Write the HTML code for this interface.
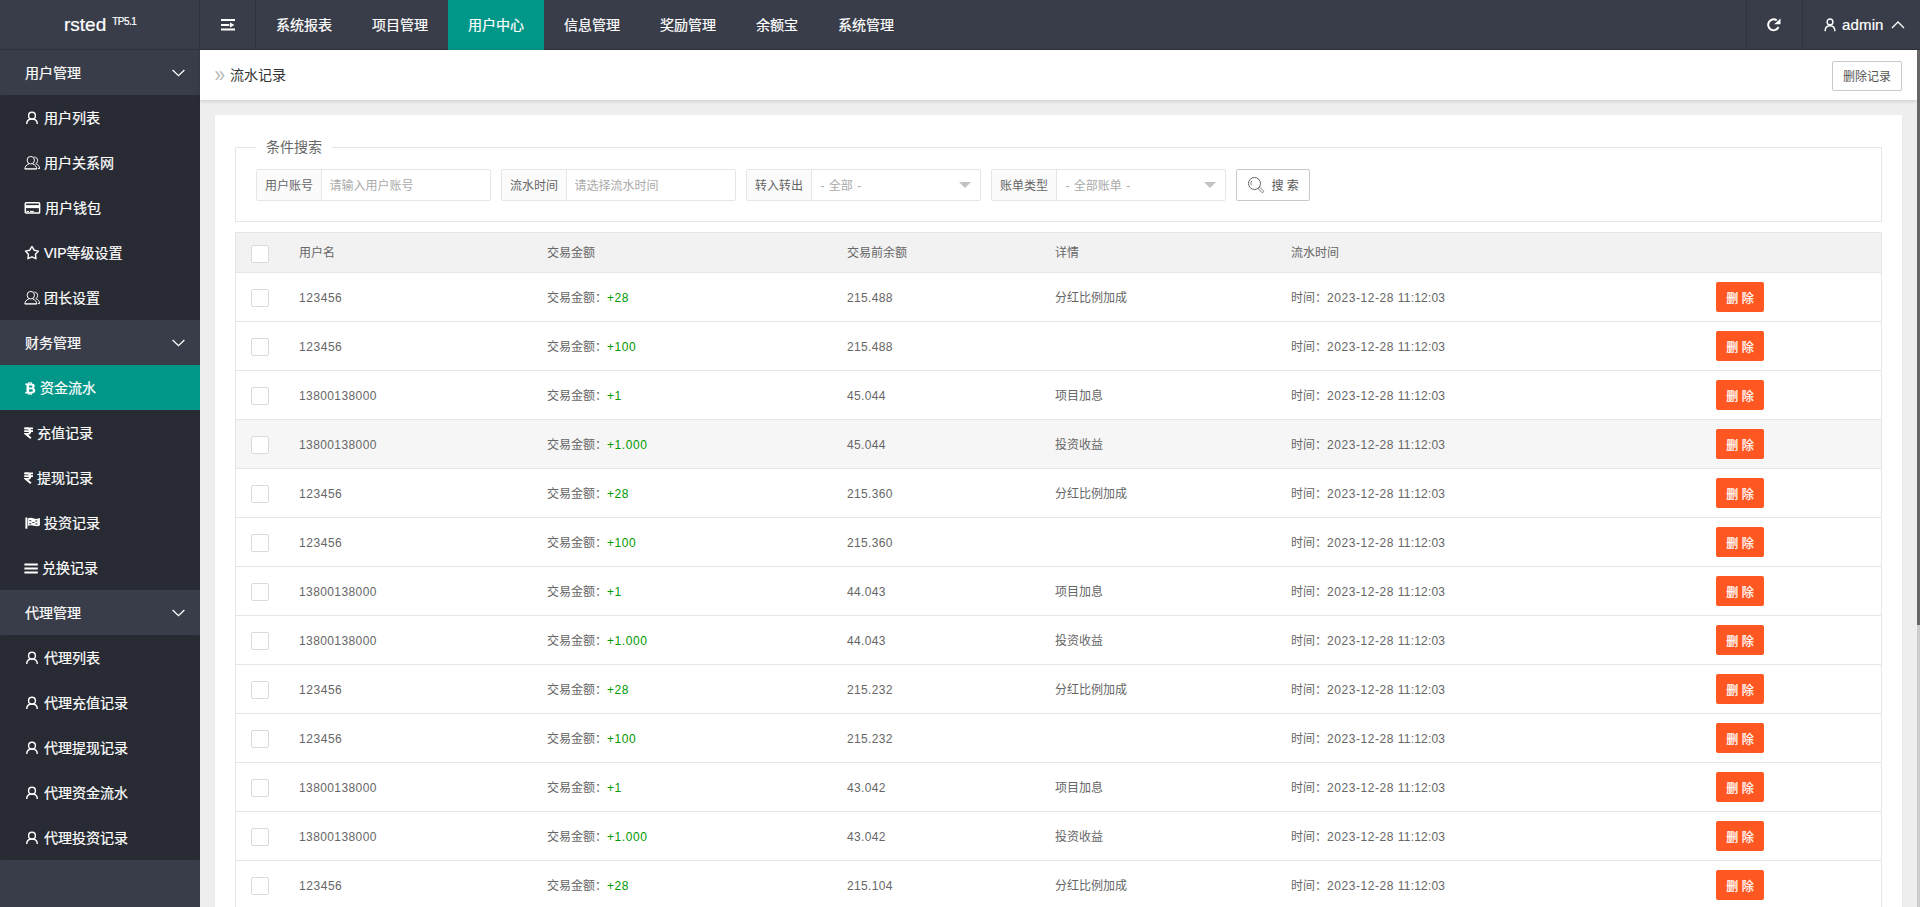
<!DOCTYPE html>
<html lang="zh-CN">
<head>
<meta charset="utf-8">
<title>流水记录</title>
<style>
*{box-sizing:border-box;margin:0;padding:0}
html,body{width:1920px;height:907px;overflow:hidden}
body{position:relative;background:#eee;font-family:"Liberation Sans","Noto Sans CJK SC",sans-serif;font-size:14px;color:#333;line-height:1}
svg{display:block}
/* header */
#hd{position:absolute;left:0;top:0;width:1920px;height:50px;background:#393d49}
#logo{position:absolute;left:64px;top:0;height:50px;color:#fff;line-height:49px;font-size:19px;white-space:nowrap}
#logo sup{font-size:10px;position:relative;top:-6px;left:6px;letter-spacing:-.5px;vertical-align:baseline}
.vl{position:absolute;top:0;width:1px;height:50px;background:#2f333d}
#nav a{position:absolute;top:0;height:50px;line-height:50px;color:#fff;font-size:14px;text-align:center;text-decoration:none}
#nav a.on{background:#009688}
#hd .ic{position:absolute}
#hd,#sd{-webkit-text-stroke:.2px #fff}
#adm{position:absolute;left:1842px;top:0;line-height:50px;color:#fff;font-size:15px;letter-spacing:.15px}
/* side */
#sd{position:absolute;left:0;top:50px;width:200px;height:857px;background:#393d49}
#sd .g{position:relative;height:45px;line-height:47px;color:#fff;padding-left:25px;font-size:14px;background:#393d49}
#sd .g svg{position:absolute;left:171.5px;top:18.7px}
#sd .sub{background:#282b33;border-radius:2px}
#sd .i{position:relative;height:45px;line-height:47px;color:#fff;font-size:14px;}
#sd .i.on{background:#009688}
#sd .i svg{position:absolute;left:24px;top:15.5px}
#sd .i span{position:absolute;left:44px;top:0;white-space:nowrap}
/* crumb */
#cb{position:absolute;left:200px;top:50px;width:1717px;height:50px;background:#fff;box-shadow:0 1px 4px rgba(0,0,0,.16)}
#cb .t{position:absolute;left:15px;top:0;line-height:50px;font-size:14px;color:#333}
#cb .t i{font-style:normal;color:#bababa;font-size:19px;position:absolute;left:-.5px;top:0;transform:scale(1,1.15);transform-origin:50% 50%}
#cb .b{position:absolute;left:1632px;top:11px;width:70px;height:30px;border:1px solid #c9c9c9;border-radius:2px;font-size:12px;line-height:30px;text-align:center;color:#555;background:#fff}
/* scrollbar */
#sbt{position:absolute;left:1917px;top:50px;width:3px;height:857px;background:#ccc}
#sbh{position:absolute;left:1917px;top:50px;width:3px;height:575px;background:#666}
/* card */
#cd{position:absolute;left:215px;top:115px;width:1687px;height:800px;background:#fff;box-shadow:0 1px 2px rgba(0,0,0,.05)}
#fs{position:absolute;left:20px;top:32px;width:1647px;height:75px;border:1px solid #e6e6e6}
#lg{position:absolute;left:20px;top:-11px;padding:0 10px;background:#fff;font-size:14px;line-height:20px;color:#666}
.ig{position:absolute;top:21px;width:235px;height:32px;border:1px solid #e6e6e6;border-radius:2px;font-size:12px;line-height:30px;background:#fff}
.ig b{font-weight:normal;position:absolute;left:0;top:0;width:65px;height:30px;line-height:32px;background:#fbfbfb;border-right:1px solid #e6e6e6;text-align:center;color:#666}
.ig span{position:absolute;left:72.5px;top:0;line-height:33px;color:#aaa;white-space:nowrap;word-spacing:1px}.ig span.s{left:73.5px}
.ig svg{position:absolute;left:212px;top:12px}
#sb{position:absolute;left:1000px;top:21px;width:74px;height:32px;border:1px solid #c9c9c9;border-radius:2px;font-size:12px;line-height:30px;color:#555;background:#fff}
#sb span{position:absolute;left:34.5px;top:0;line-height:33px;white-space:nowrap}
#sb svg{position:absolute;left:10.2px;top:6px}
/* table */
#tb{position:absolute;left:20px;top:117px;width:1647px;border:1px solid #e6e6e6;border-bottom:none;font-size:12px;color:#666}
#tb .r{position:relative;height:49px;border-bottom:1px solid #e6e6e6;line-height:50px;background:#fff}
#tb .r.h{height:40px;line-height:40px;background:#f2f2f2}
#tb .r.hv{background:#f6f6f6}
#tb .r>*{position:absolute;top:0;white-space:nowrap}
#tb .k{left:15px;top:16px;width:18px;height:18px;border:1px solid #dadada;border-radius:2px;background:#fff}
#tb .r.h .k{top:12px}
#tb .c1{left:63px}#tb .c2{left:311px}#tb .c3{left:611px}#tb .c4{left:819px}#tb .c5{left:1055px}
#tb .c2 em{font-style:normal;color:#090}
#tb .d{left:1480px;top:9px;width:48px;height:30px;border-radius:2px;background:#ff5722;color:#fff;line-height:34px;text-align:center;font-size:12px;-webkit-text-stroke:.25px #fff}
.n{letter-spacing:.55px}.n1{letter-spacing:.4px}.n3{letter-spacing:.33px}.m{letter-spacing:.2px}
</style>
</head>
<body>
<div id="hd">
  <div id="logo">rsted<sup>TP5.1</sup></div>
  <div class="vl" style="left:199px"></div><div style="position:absolute;left:0;top:49px;width:1920px;height:1px;background:rgba(0,0,0,.17)"></div><div class="vl" style="left:255px"></div>
  <div class="vl" style="left:1746px"></div><div class="vl" style="left:1802px"></div>
  <svg class="ic" style="left:221px;top:19px" width="14" height="12" viewBox="0 0 14 12"><path d="M0 0h14v2H0zM0 5h8.300v2H0zM0 9.500h14v2H0zM9 3.600l4.400 2.400L9 8.400z" fill="#fff"/></svg>
  <div id="nav">
    <a style="left:256px;width:96px">系统报表</a>
    <a style="left:352px;width:96px">项目管理</a>
    <a class="on" style="left:448px;width:96px">用户中心</a>
    <a style="left:544px;width:96px">信息管理</a>
    <a style="left:640px;width:96px">奖励管理</a>
    <a style="left:736px;width:82px">余额宝</a>
    <a style="left:818px;width:96px">系统管理</a>
  </div>
  <svg class="ic" style="left:1767px;top:18px" width="14" height="14" viewBox="0 0 14 14"><path d="M9.7 2.330A5.400 5.400 0 1 0 11.500 9.030" stroke="#fff" stroke-width="2" fill="none"/><path d="M7.200 6.200H13.500V.6z" fill="#fff"/></svg>
  <svg class="ic" style="left:1824px;top:18px" width="12" height="14" viewBox="0 0 12 14"><circle cx="6" cy="3.9" r="2.9" stroke="#fff" stroke-width="1.4" fill="none"/><path d="M1.1 13.200c0-3.800 2.100-5.500 4.900-5.500s4.900 1.700 4.900 5.500" stroke="#fff" stroke-width="1.4" fill="none"/></svg>
  <div id="adm">admin</div>
  <svg class="ic" style="left:1891px;top:21px" width="14" height="8" viewBox="0 0 14 8"><path d="M1 7l6-6 6 6" stroke="#fff" stroke-width="1.3" fill="none"/></svg>
</div>

<div id="sd">
  <div class="g">用户管理<svg width="13" height="8" viewBox="0 0 13 8"><path d="M.6 1l5.9 5.7L12.4 1" stroke="#fff" stroke-width="1.3" fill="none"/></svg></div>
  <div class="sub">
  <div class="i"><svg width="17" height="15" viewBox="0 0 17 15"><circle cx="8" cy="4.7" r="3.4" stroke="#fff" stroke-width="1.4" fill="none"/><path d="M2.7 13.1c0-3.400 2.200-5.100 5.300-5.100s5.300 1.700 5.300 5.100" stroke="#fff" stroke-width="1.4" fill="none"/></svg><span>用户列表</span></div>
  <div class="i"><svg width="17" height="15" viewBox="0 0 17 15"><g stroke="#fff" stroke-width="1" fill="none"><ellipse cx="6.8" cy="4.2" rx="3.700" ry="3.800"/><path d="M.9 13.1c0-2.700 1.500-4.300 4-5.100M12.700 13.100c0-2.700-1.500-4.300-4-5.100"/><path d="M.9 12.900h11.800" stroke-width="1.400"/><path d="M10.400 1c2 .2 3.200 1.600 3.200 3.500 0 1.500-.7 2.600-1.800 3.200 2.300.8 3.700 2.300 3.700 4.900h-1.600"/></g></svg><span>用户关系网</span></div>
  <div class="i"><svg width="17" height="15" viewBox="0 0 17 15"><rect x="1.3" y="1.85" width="14.3" height="10.1" rx=".8" stroke="#fff" stroke-width="1.5" fill="none"/><rect x="1" y="4.1" width="15" height="3" fill="#fff"/><rect x="2.5" y="9.9" width="2.5" height="1.1" fill="#fff"/><rect x="6" y="9.9" width="3.8" height="1.1" fill="#fff"/></svg><span style="left:45px">用户钱包</span></div>
  <div class="i"><svg width="17" height="15" viewBox="0 0 17 15"><path d="M7.95 0.40L10.12 4.21L14.42 5.10L11.47 8.34L11.95 12.70L7.95 10.90L3.95 12.70L4.43 8.34L1.48 5.10L5.78 4.21z" stroke="#fff" stroke-width="1.4" fill="none" stroke-linejoin="round"/></svg><span>VIP等级设置</span></div>
  <div class="i"><svg width="17" height="15" viewBox="0 0 17 15"><g stroke="#fff" stroke-width="1" fill="none"><ellipse cx="6.8" cy="4.2" rx="3.700" ry="3.800"/><path d="M.9 13.1c0-2.700 1.500-4.300 4-5.100M12.700 13.100c0-2.700-1.500-4.300-4-5.100"/><path d="M.9 12.900h11.800" stroke-width="1.400"/><path d="M10.400 1c2 .2 3.200 1.600 3.200 3.500 0 1.500-.7 2.600-1.800 3.200 2.300.8 3.700 2.300 3.700 4.900h-1.600"/></g></svg><span>团长设置</span></div>
  </div>
  <div class="g">财务管理<svg width="13" height="8" viewBox="0 0 13 8"><path d="M.6 1l5.9 5.7L12.4 1" stroke="#fff" stroke-width="1.3" fill="none"/></svg></div>
  <div class="sub">
  <div class="i on"><svg width="17" height="15" viewBox="0 0 17 15"><g transform="translate(.7 0)"><path d="M1.800 2.500h5.200c2 0 3 .9 3 2.400 0 1.100-.6 1.900-1.600 2.200 1.400.3 2.200 1.200 2.200 2.500 0 1.700-1.200 2.900-3.400 2.900H1.800zM4.400 4.400v2.100h2c.8 0 1.200-.4 1.200-1.100s-.4-1-1.200-1zM4.400 8.300v2.400h2.300c.9 0 1.400-.4 1.400-1.200s-.5-1.200-1.400-1.200z" fill="#fff" fill-rule="evenodd"/><path d="M4.200 1v2M6.400 1v2M4.200 12v2M6.400 12v2" stroke="#fff" stroke-width="1.300"/><path d="M.6 3.200h2M.6 11.800h2" stroke="#fff" stroke-width="1.400"/></g></svg><span style="left:40px">资金流水</span></div>
  <div class="i"><svg width="17" height="15" viewBox="0 0 17 15"><g stroke="#fff" fill="none"><path d="M.2 2.350h8.800M.2 5.200h8.800" stroke-width="1.700"/><path d="M.8 2.350h2.200c2.200 0 3.300 1.100 3.300 2.850S5.100 8.050 2.900 8.050H1.800L6.900 12.300" stroke-width="1.900"/></g></svg><span style="left:37px">充值记录</span></div>
  <div class="i"><svg width="17" height="15" viewBox="0 0 17 15"><g stroke="#fff" fill="none"><path d="M.2 2.350h8.800M.2 5.200h8.800" stroke-width="1.700"/><path d="M.8 2.350h2.200c2.200 0 3.300 1.100 3.300 2.850S5.100 8.050 2.900 8.050H1.800L6.900 12.300" stroke-width="1.900"/></g></svg><span style="left:37px">提现记录</span></div>
  <div class="i"><svg width="17" height="15" viewBox="0 0 17 15"><path d="M2.4 1.500v11.200" stroke="#fff" stroke-width="2"/><path d="M3.900 2.400c2.200-1 3.900-.7 6 0s3.900.7 6-.3v7.400c-2.100 1-3.900 1-6 .3s-3.800-1-6 0z" fill="#fff"/><path d="M5.300 4.200h2v1.100h-2zM11.300 4.400h2.100v1.100h-2.100zM8.400 5.900h2v1.100h-2zM5.300 7.300h2v1h-2zM11.400 7.600h2.100v1h-2.100z" fill="#282b33"/></svg><span>投资记录</span></div>
  <div class="i"><svg width="17" height="15" viewBox="0 0 17 15"><path d="M.4 2.500h13.400v2H.4zM.4 6.500h13.400v2H.4zM.4 10.500h13.400v2H.4z" fill="#fff"/></svg><span style="left:42px">兑换记录</span></div>
  </div>
  <div class="g">代理管理<svg width="13" height="8" viewBox="0 0 13 8"><path d="M.6 1l5.9 5.7L12.4 1" stroke="#fff" stroke-width="1.3" fill="none"/></svg></div>
  <div class="sub">
  <div class="i"><svg width="17" height="15" viewBox="0 0 17 15"><circle cx="8" cy="4.7" r="3.4" stroke="#fff" stroke-width="1.4" fill="none"/><path d="M2.7 13.1c0-3.400 2.200-5.100 5.300-5.100s5.300 1.700 5.300 5.100" stroke="#fff" stroke-width="1.4" fill="none"/></svg><span>代理列表</span></div>
  <div class="i"><svg width="17" height="15" viewBox="0 0 17 15"><circle cx="8" cy="4.7" r="3.4" stroke="#fff" stroke-width="1.4" fill="none"/><path d="M2.7 13.1c0-3.400 2.200-5.100 5.300-5.100s5.300 1.700 5.300 5.100" stroke="#fff" stroke-width="1.4" fill="none"/></svg><span>代理充值记录</span></div>
  <div class="i"><svg width="17" height="15" viewBox="0 0 17 15"><circle cx="8" cy="4.7" r="3.4" stroke="#fff" stroke-width="1.4" fill="none"/><path d="M2.7 13.1c0-3.400 2.200-5.100 5.300-5.100s5.300 1.700 5.300 5.100" stroke="#fff" stroke-width="1.4" fill="none"/></svg><span>代理提现记录</span></div>
  <div class="i"><svg width="17" height="15" viewBox="0 0 17 15"><circle cx="8" cy="4.7" r="3.4" stroke="#fff" stroke-width="1.4" fill="none"/><path d="M2.7 13.1c0-3.400 2.200-5.100 5.300-5.100s5.300 1.700 5.300 5.100" stroke="#fff" stroke-width="1.4" fill="none"/></svg><span>代理资金流水</span></div>
  <div class="i"><svg width="17" height="15" viewBox="0 0 17 15"><circle cx="8" cy="4.7" r="3.4" stroke="#fff" stroke-width="1.4" fill="none"/><path d="M2.7 13.1c0-3.400 2.200-5.100 5.300-5.100s5.300 1.700 5.300 5.100" stroke="#fff" stroke-width="1.4" fill="none"/></svg><span>代理投资记录</span></div>
  </div>
</div>

<div id="cb">
  <div class="t"><i>»</i><span style="margin-left:15px">流水记录</span></div>
  <div class="b">删除记录</div>
</div>
<div id="sbt"></div><div id="sbh"></div>

<div id="cd">
  <div id="fs">
    <div id="lg">条件搜索</div>
    <div class="ig" style="left:20px"><b>用户账号</b><span>请输入用户账号</span></div>
    <div class="ig" style="left:265px"><b>流水时间</b><span>请选择流水时间</span></div>
    <div class="ig" style="left:510px"><b>转入转出</b><span class="s">- 全部 -</span><svg width="12" height="6" viewBox="0 0 12 6"><path d="M0 0h12L6 6z" fill="#c2c2c2"/></svg></div>
    <div class="ig" style="left:755px"><b>账单类型</b><span class="s">- 全部账单 -</span><svg width="12" height="6" viewBox="0 0 12 6"><path d="M0 0h12L6 6z" fill="#c2c2c2"/></svg></div>
    <div id="sb"><svg width="18" height="18" viewBox="0 0 18 18"><circle cx="7.5" cy="7.5" r="6" stroke="#666" stroke-width="1" fill="none"/><rect x="-1.1" y="0" width="2.2" height="6.4" rx="1.1" transform="translate(11.7 11.7) rotate(-45)" stroke="#666" stroke-width=".8" fill="none"/><path d="M4.300 9.300a3.700 3.700 0 0 1 .6-4.500" stroke="#666" stroke-width=".8" fill="none"/></svg><span>搜 索</span></div>
  </div>
  <div id="tb">
    <div class="r h"><i class="k"></i><span class="c1">用户名</span><span class="c2">交易金额</span><span class="c3">交易前余额</span><span class="c4">详情</span><span class="c5">流水时间</span></div>
    <div class="r"><i class="k"></i><span class="c1 n">123456</span><span class="c2">交易金额：<em class="n">+28</em></span><span class="c3 n3">215.488</span><span class="c4">分红比例加成</span><span class="c5">时间：<span class="n">2023-12-28 </span><span class="m">11:12:03</span></span><span class="d">删 除</span></div>
    <div class="r"><i class="k"></i><span class="c1 n">123456</span><span class="c2">交易金额：<em class="n">+100</em></span><span class="c3 n3">215.488</span><span class="c4"></span><span class="c5">时间：<span class="n">2023-12-28 </span><span class="m">11:12:03</span></span><span class="d">删 除</span></div>
    <div class="r"><i class="k"></i><span class="c1 n1">13800138000</span><span class="c2">交易金额：<em class="n">+1</em></span><span class="c3 n3">45.044</span><span class="c4">项目加息</span><span class="c5">时间：<span class="n">2023-12-28 </span><span class="m">11:12:03</span></span><span class="d">删 除</span></div>
    <div class="r hv"><i class="k"></i><span class="c1 n1">13800138000</span><span class="c2">交易金额：<em class="n">+1.000</em></span><span class="c3 n3">45.044</span><span class="c4">投资收益</span><span class="c5">时间：<span class="n">2023-12-28 </span><span class="m">11:12:03</span></span><span class="d">删 除</span></div>
    <div class="r"><i class="k"></i><span class="c1 n">123456</span><span class="c2">交易金额：<em class="n">+28</em></span><span class="c3 n3">215.360</span><span class="c4">分红比例加成</span><span class="c5">时间：<span class="n">2023-12-28 </span><span class="m">11:12:03</span></span><span class="d">删 除</span></div>
    <div class="r"><i class="k"></i><span class="c1 n">123456</span><span class="c2">交易金额：<em class="n">+100</em></span><span class="c3 n3">215.360</span><span class="c4"></span><span class="c5">时间：<span class="n">2023-12-28 </span><span class="m">11:12:03</span></span><span class="d">删 除</span></div>
    <div class="r"><i class="k"></i><span class="c1 n1">13800138000</span><span class="c2">交易金额：<em class="n">+1</em></span><span class="c3 n3">44.043</span><span class="c4">项目加息</span><span class="c5">时间：<span class="n">2023-12-28 </span><span class="m">11:12:03</span></span><span class="d">删 除</span></div>
    <div class="r"><i class="k"></i><span class="c1 n1">13800138000</span><span class="c2">交易金额：<em class="n">+1.000</em></span><span class="c3 n3">44.043</span><span class="c4">投资收益</span><span class="c5">时间：<span class="n">2023-12-28 </span><span class="m">11:12:03</span></span><span class="d">删 除</span></div>
    <div class="r"><i class="k"></i><span class="c1 n">123456</span><span class="c2">交易金额：<em class="n">+28</em></span><span class="c3 n3">215.232</span><span class="c4">分红比例加成</span><span class="c5">时间：<span class="n">2023-12-28 </span><span class="m">11:12:03</span></span><span class="d">删 除</span></div>
    <div class="r"><i class="k"></i><span class="c1 n">123456</span><span class="c2">交易金额：<em class="n">+100</em></span><span class="c3 n3">215.232</span><span class="c4"></span><span class="c5">时间：<span class="n">2023-12-28 </span><span class="m">11:12:03</span></span><span class="d">删 除</span></div>
    <div class="r"><i class="k"></i><span class="c1 n1">13800138000</span><span class="c2">交易金额：<em class="n">+1</em></span><span class="c3 n3">43.042</span><span class="c4">项目加息</span><span class="c5">时间：<span class="n">2023-12-28 </span><span class="m">11:12:03</span></span><span class="d">删 除</span></div>
    <div class="r"><i class="k"></i><span class="c1 n1">13800138000</span><span class="c2">交易金额：<em class="n">+1.000</em></span><span class="c3 n3">43.042</span><span class="c4">投资收益</span><span class="c5">时间：<span class="n">2023-12-28 </span><span class="m">11:12:03</span></span><span class="d">删 除</span></div>
    <div class="r"><i class="k"></i><span class="c1 n">123456</span><span class="c2">交易金额：<em class="n">+28</em></span><span class="c3 n3">215.104</span><span class="c4">分红比例加成</span><span class="c5">时间：<span class="n">2023-12-28 </span><span class="m">11:12:03</span></span><span class="d">删 除</span></div>
  </div>
</div>
</body>
</html>
